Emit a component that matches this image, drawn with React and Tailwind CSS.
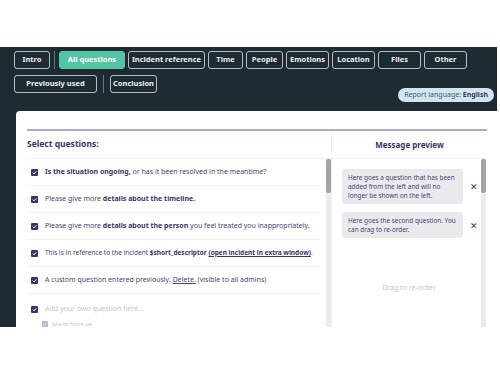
function Tab({ children, active, className = "" }) {
  return (
    <button
      className={
        "h-[18px] rounded-[3px] border text-[7.5px] font-bold leading-none " +
        (active
          ? "border-[#55c3a5] bg-[#55c3a5] text-white "
          : "border-[#b8bec3] text-[#eef1f3] ") +
        className
      }
    >
      {children}
    </button>
  );
}

function Check({ small }) {
  return (
    <span
      className={
        "flex shrink-0 items-center justify-center rounded-[1px] " +
        (small ? "h-[6px] w-[6px] bg-[#b9b5cf]" : "h-[7px] w-[7px] bg-[#3b3467]")
      }
    >
      <svg viewBox="0 0 10 10" className="h-full w-full">
        <path d="M2.5 5.2 L4.3 7 L7.6 3.2" stroke="white" strokeWidth="1.4" fill="none" />
      </svg>
    </span>
  );
}

function Row({ children }) {
  return (
    <div className="flex h-[27px] items-center gap-[7px] border-b border-[#efeff3] pl-[4px] text-[7px] text-[#4a4570]">
      <Check />
      <div>{children}</div>
    </div>
  );
}

function Bubble({ children }) {
  return (
    <div className="flex items-center">
      <div className="w-[121px] shrink-0 rounded-[3px] bg-[#e9e9ee] py-[4px] pl-[6px] pr-[2px] text-[6.4px] leading-[9px] text-[#4a4570]">
        {children}
      </div>
      <span className="ml-[7px] text-[9px] leading-none text-[#3b3467]">✕</span>
    </div>
  );
}

export default function App() {
  return (
    <div className="h-[375px] w-[500px] overflow-hidden bg-white" style={{ fontFamily: '"Noto Sans", "Open Sans", sans-serif' }}>
      <div className="h-[47px]" />
      <div className="h-[280px] w-[497px] overflow-hidden bg-[#1f2b33] pt-[4px]">
        <div className="flex items-center gap-[3px] pl-[14px]">
          <Tab className="w-[36px]">Intro</Tab>
          <span className="mx-[1px] h-[18px] w-px bg-[#6d767d]" />
          <Tab active className="w-[66px]">All questions</Tab>
          <Tab className="w-[77px]">Incident reference</Tab>
          <Tab className="w-[35px]">Time</Tab>
          <Tab className="w-[37px]">People</Tab>
          <Tab className="w-[43px]">Emotions</Tab>
          <Tab className="w-[43px]">Location</Tab>
          <Tab className="w-[43px]">Files</Tab>
          <Tab className="w-[43px]">Other</Tab>
        </div>
        <div className="mt-[6px] flex items-start gap-[6px] pl-[14px]">
          <Tab className="w-[83px]">Previously used</Tab>
          <span className="h-[18px] w-px bg-[#6d767d]" />
          <Tab className="w-[47px]">Conclusion</Tab>
          <div className="ml-auto mr-[3px] mt-[13px] flex h-[14px] items-center rounded-full bg-[#cfe6ec] px-[6px] text-[7px] text-[#56537a]">
            Report language:&nbsp;<b className="text-[#3b3467]">English</b>
          </div>
        </div>
        <div className="ml-[16px] mt-[9px] h-[300px] rounded-tl-[4px] bg-white px-[11px] pt-[18px]">
          <div className="h-[2px] w-[460px] bg-[#aeabc4]" />
          <div className="flex">
            <div className="w-[304px] shrink-0">
              <div className="flex h-[28px] items-center border-b border-[#efeff3] text-[8.5px] font-bold text-[#3b3467]">
                Select questions:
              </div>
              <div className="flex">
                <div className="w-[293px]">
                  <Row>
                    <b className="text-[#3b3467]">Is the situation ongoing,</b> or has it been resolved in the meantime?
                  </Row>
                  <Row>
                    Please give more <b className="text-[#3b3467]">details about the timeline.</b>
                  </Row>
                  <Row>
                    Please give more <b className="text-[#3b3467]">details about the person</b> you feel treated you inappropriately.
                  </Row>
                  <Row>
                    <span className="text-[6.5px]">
                      This is in reference to the incident <b className="text-[#3b3467]">$short_descriptor</b>{" "}
                      <b className="text-[#3b3467] underline">(open incident in extra window)</b>.
                    </span>
                  </Row>
                  <Row>
                    A custom question entered previously. <span className="underline">Delete.</span> (visible to all admins)
                  </Row>
                  <div className="flex items-center gap-[7px] pl-[4px] pt-[10px] text-[7px] text-[#c4c2d2]">
                    <Check />
                    <span>Add your own question here...</span>
                  </div>
                  <div className="mt-[6px] flex items-center gap-[4px] pl-[15px] text-[4.5px] text-[#c4c2d2]">
                    <Check small />
                    <span>Save for future use</span>
                  </div>
                </div>
                <div className="ml-auto h-[200px] w-[5px] bg-[#ececee]">
                  <div className="h-[34px] w-[5px] rounded-[2px] bg-[#a3a3a6]" />
                </div>
              </div>
            </div>
            <div className="w-[156px] shrink-0 border-l border-[#efeff3]">
              <div className="flex h-[28px] items-center justify-center border-b border-[#efeff3] text-[8px] font-bold text-[#3b3467]">
                Message preview
              </div>
              <div className="flex">
                <div className="flex flex-col gap-[8px] pl-[10px] pt-[10px]">
                  <Bubble>
                    Here goes a question that has been
                    <br />
                    added from the left and will no
                    <br />
                    longer be shown on the left.
                  </Bubble>
                  <Bubble>
                    Here goes the second question. You
                    <br />
                    can drag to re-order.
                  </Bubble>
                  <div className="mt-[37px] w-[134px] text-center text-[7px] text-[#c4c2d2]">Drag to re-order</div>
                </div>
                <div className="ml-auto mr-[1px] h-[200px] w-[5px] bg-[#ececee]">
                  <div className="h-[34px] w-[5px] rounded-[2px] bg-[#a3a3a6]" />
                </div>
              </div>
            </div>
          </div>
        </div>
      </div>
    </div>
  );
}
